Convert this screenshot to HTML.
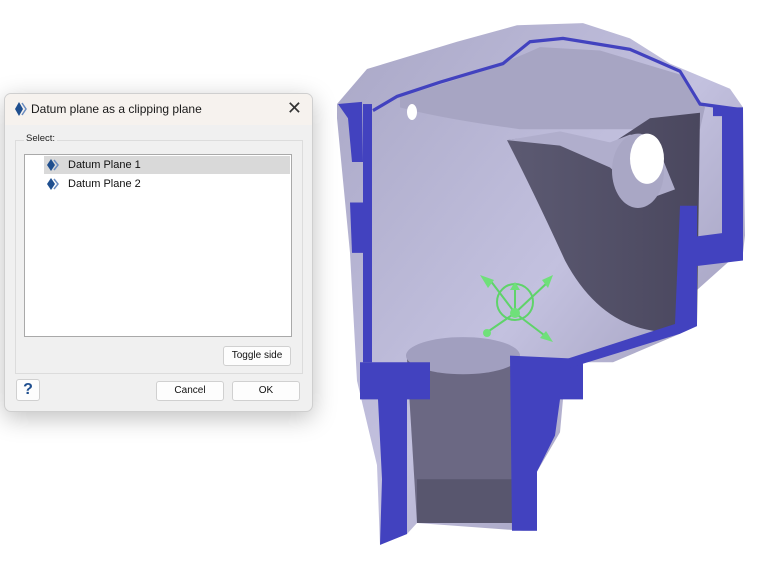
<!DOCTYPE html>
<html><head><style>
body{margin:0;width:766px;height:570px;background:#fff;position:relative;overflow:hidden;font-family:"Liberation Sans",sans-serif;}
.dlg{position:absolute;left:4px;top:93px;width:307px;height:317px;background:#f0f0f0;border:1px solid #cfcfcf;border-radius:7px;box-shadow:0 6px 24px rgba(0,0,0,.25);overflow:hidden}
.tb{height:31px;background:#f6f2ee;position:relative}
.tb .t{position:absolute;left:26px;top:8px;font-size:12px;color:#1a1a1a}
.tb .x{position:absolute;right:10px;top:4px;font-size:18px;color:#333}
.grp{position:absolute;left:10px;top:46px;width:286px;height:232px;border:1px solid #dcdcdc}
.grp .l{position:absolute;left:8px;top:-8px;background:#f0f0f0;font-size:9.5px;padding:0 2px;color:#222}
.list{position:absolute;left:8px;top:13px;width:266px;height:181px;background:#fff;border:1px solid #a9a9a9}
.row{position:absolute;left:19px;height:18px;width:246px;font-size:11px;line-height:18px;color:#111}
.row span{margin-left:24px}
.btn{position:absolute;background:#fdfdfd;border:1px solid #d0d0d0;border-radius:3px;font-size:10px;text-align:center;color:#111}
</style></head><body>
<svg width="766" height="570" style="position:absolute;left:0;top:0">
<defs>
<linearGradient id="g1" x1="0" y1="0" x2="1" y2="1"><stop offset="0" stop-color="#a9a7c6"/><stop offset=".5" stop-color="#c3c1df"/><stop offset="1" stop-color="#8d8aaa"/></linearGradient>
<linearGradient id="g2" x1="0" y1="0" x2="1" y2="0"><stop offset="0" stop-color="#5c5a72"/><stop offset="1" stop-color="#4a475e"/></linearGradient>
</defs>
<g transform="matrix(1 0 0 1.094 0 -2.07)">
<path d="M337,97 L367,65 L457,40 L517,25 L583,23 L630,37 L670,60 L730,83 L743,100 L745,217 L743,233 L730,240 L697,267 L680,307 L613,333 L583,333 L563,367 L560,397 L537,433 L537,487 L523,487 L417,480 L407,490 L380,500 L377,427 L357,350 L350,233 L337,110 Z" fill="url(#g1)"/>
<path d="M400,90 Q480,70 540,45 L600,48 L680,70 L705,100 L700,120 L520,120 Q440,110 400,100Z" fill="#a7a5c3"/>
<path d="M507,130 Q560,122 600,140 L650,110 L700,105 L697,298 L660,305 Q600,300 565,240 Q535,180 507,130 Z" fill="url(#g2)"/>
<path d="M507,130 L560,122 L610,132 L630,125 L655,130 L675,175 L645,185 L610,155 L560,135 Z" fill="#b0aecc"/>
<ellipse cx="638" cy="158" rx="26" ry="34" fill="#a9a7c5"/>
<ellipse cx="647" cy="147" rx="17" ry="23" fill="#fff"/>
<path d="M407,330 L517,330 L517,480 L417,480 Z" fill="#6b6883"/>
<ellipse cx="463" cy="327" rx="57" ry="17" fill="#a19fbf"/>
<path d="M417,440 L517,440 L517,480 L417,480 Z" fill="#58566e"/>
<path d="M373,103 L397,90 L440,77 L477,67 L503,60 L530,40 L563,37 L630,47 L680,67 L700,97 L740,102" fill="none" stroke="#4242bf" stroke-width="3"/>
<g fill="#4242bf">
<path d="M338,97 L362,95 L363,150 L352,150 L348,110Z"/>
<rect x="363" y="97" width="9" height="236"/>
<path d="M350,187 L372,187 L372,233 L352,233Z"/>
<path d="M360,333 L430,333 L430,367 L407,367 L407,490 L380,500 L382,440 L378,367 L360,367Z"/>
<path d="M510,327 L583,330 L583,367 L560,367 L555,400 L537,433 L537,487 L512,487Z"/>
<path d="M713,100 L743,100 L743,240 L697,245 L697,218 L722,215 L722,108 L713,108Z"/>
<path d="M680,190 L697,190 L697,300 L680,307 L563,340 L560,332 L675,298Z"/>
</g>
</g>
<ellipse cx="412" cy="112" rx="5" ry="8" fill="#fff"/>
<g stroke="#5fd36a" stroke-width="2" fill="none">
<circle cx="515" cy="302" r="18"/>
<line x1="515" y1="313" x2="490" y2="280"/><line x1="515" y1="313" x2="548" y2="282"/>
<line x1="515" y1="313" x2="486" y2="333"/><line x1="515" y1="313" x2="548" y2="338"/>
<line x1="515" y1="313" x2="515" y2="290"/>
</g>
<g fill="#6fe07a"><circle cx="515" cy="313" r="5"/><polygon points="480,275 494,280 488,288"/><polygon points="553,275 542,280 548,288"/><polygon points="553,342 540,338 546,331"/><circle cx="487" cy="333" r="4"/><polygon points="510,290 520,290 515,282"/></g>
</svg>
<div class="dlg">
<div class="tb"><svg style="position:absolute;left:8px;top:7px" width="14" height="16"><path d="M6,1 L2,8 L6,15 L10,8Z" fill="#1f4f8f"/><path d="M9,2 L13,8 L9,14" fill="none" stroke="#6a8cc0" stroke-width="1.5"/></svg><div class="t">Datum plane as a clipping plane</div><div class="x">✕</div></div>
<div class="grp"><div class="l">Select:</div>
<div class="list">
<div class="row" style="top:1px;background:#d9d9d9"><svg style="position:absolute;left:2px;top:2px" width="14" height="14"><path d="M5,1 L1,7 L5,13 L9,7Z" fill="#1f4f8f"/><path d="M8,2 L12,7 L8,12" fill="none" stroke="#6a8cc0" stroke-width="1.5"/></svg><span>Datum Plane 1</span></div>
<div class="row" style="top:20px"><svg style="position:absolute;left:2px;top:2px" width="14" height="14"><path d="M5,1 L1,7 L5,13 L9,7Z" fill="#1f4f8f"/><path d="M8,2 L12,7 L8,12" fill="none" stroke="#6a8cc0" stroke-width="1.5"/></svg><span>Datum Plane 2</span></div>
</div>
<div class="btn" style="left:207px;top:205px;width:66px;height:18px;line-height:18px">Toggle side</div>
</div>
<div class="btn" style="left:11px;top:285px;width:22px;height:20px;line-height:20px;font-size:16px;font-weight:bold;color:#1f4f8f">?</div>
<div class="btn" style="left:151px;top:287px;width:66px;height:18px;line-height:18px">Cancel</div>
<div class="btn" style="left:227px;top:287px;width:66px;height:18px;line-height:18px">OK</div>
</div>
</body></html>
